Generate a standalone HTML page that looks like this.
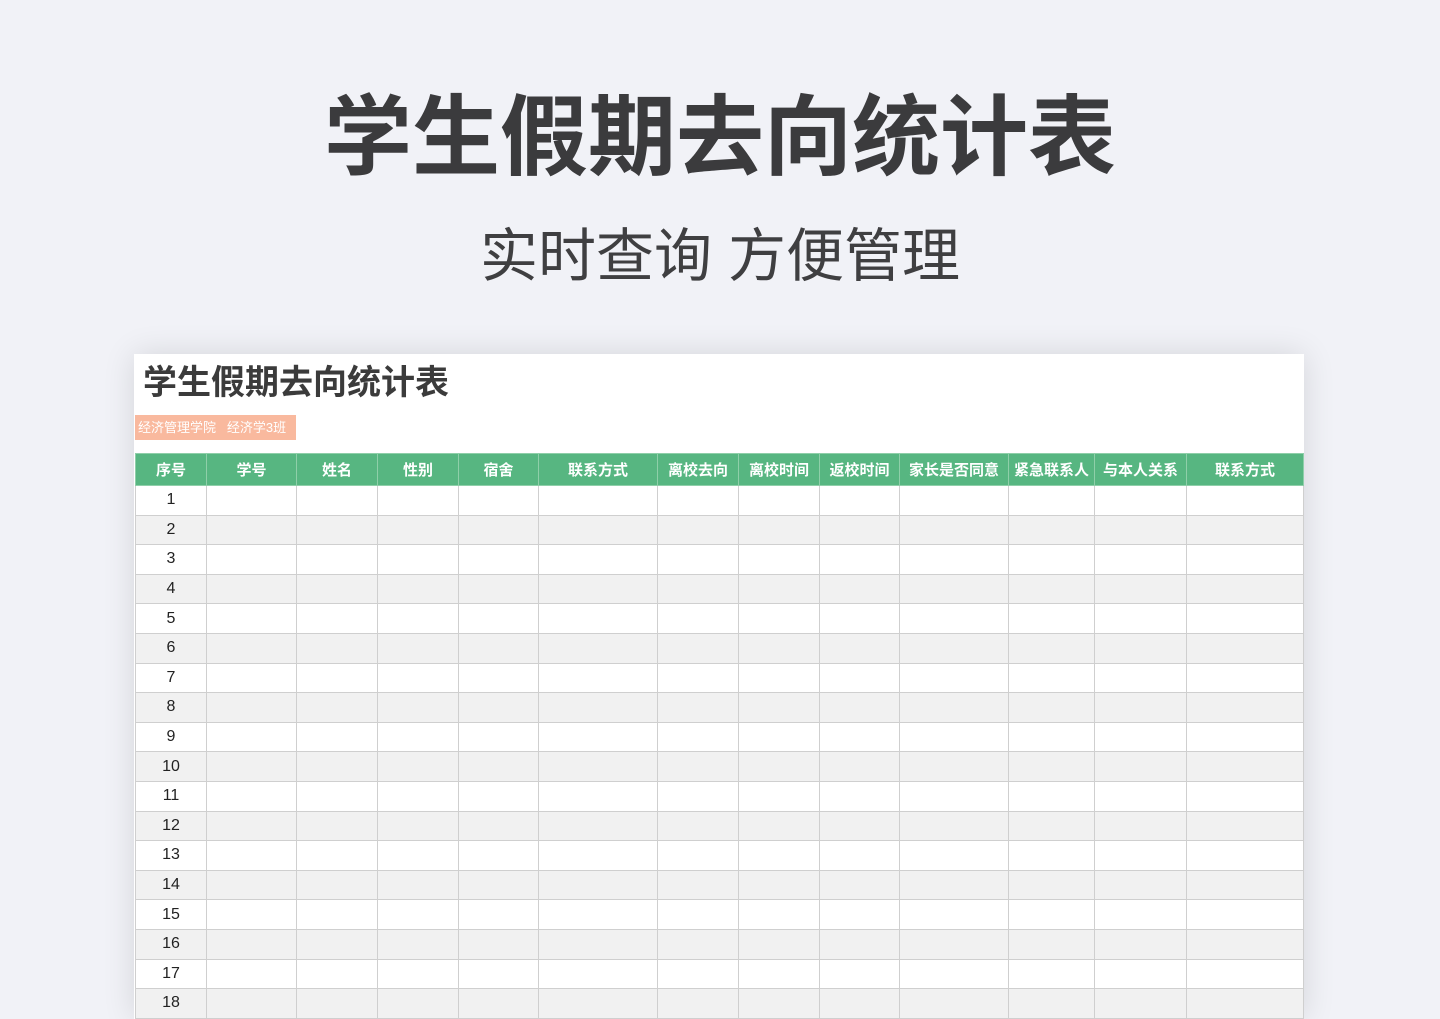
<!DOCTYPE html>
<html><head><meta charset="utf-8">
<style>
html,body{margin:0;padding:0;overflow:hidden;height:1019px;}
body{width:1440px;height:1019px;background:#f1f2f7;position:relative;overflow:hidden;font-family:"Liberation Sans","Noto Sans CJK SC",sans-serif;}
.h1{position:absolute;left:0;width:1440px;top:78px;text-align:center;font-size:88px;font-weight:bold;color:#3b3b3d;line-height:120px;}
.h2{position:absolute;left:0;width:1440px;top:219px;text-align:center;font-size:58px;color:#3f3f41;line-height:76px;}
.card{position:absolute;left:134px;top:354px;width:1170px;height:665px;background:#fff;box-shadow:0 0 30px rgba(0,0,0,0.12);}
.ct{position:absolute;left:143px;top:360px;font-size:34px;font-weight:bold;color:#3b3b3b;line-height:46px;}
.badge{position:absolute;left:135px;top:415px;width:161px;height:25px;background:#f9b99e;color:#fff;font-size:13px;line-height:25px;padding-left:3px;box-sizing:border-box;white-space:pre;}
table{position:absolute;left:135px;top:453px;border-collapse:collapse;table-layout:fixed;width:1168px;}
td{border:1px solid #cfcfcf;padding:0;text-align:center;font-size:16px;color:#222;height:28.6px;}
tr.h td{background:#57b681;color:#fff;font-weight:bold;font-size:15px;height:31px;border-color:#8fcfa9;white-space:nowrap;overflow:hidden;}
tr.g td{background:#f1f1f1;}
</style></head><body>
<div class="h1">学生假期去向统计表</div>
<div class="h2">实时查询 方便管理</div>
<div class="card"></div>
<div class="ct">学生假期去向统计表</div>
<div class="badge">经济管理学院   经济学3班</div>
<table>
<colgroup><col style="width:71px"><col style="width:90px"><col style="width:81px"><col style="width:81px"><col style="width:80px"><col style="width:119px"><col style="width:81px"><col style="width:81px"><col style="width:80px"><col style="width:109px"><col style="width:86px"><col style="width:92px"><col style="width:117px"></colgroup>
<tr class="h"><td>序号</td><td>学号</td><td>姓名</td><td>性别</td><td>宿舍</td><td>联系方式</td><td>离校去向</td><td>离校时间</td><td>返校时间</td><td>家长是否同意</td><td>紧急联系人</td><td>与本人关系</td><td>联系方式</td></tr>
<tr><td>1</td><td></td><td></td><td></td><td></td><td></td><td></td><td></td><td></td><td></td><td></td><td></td><td></td></tr>
<tr class="g"><td>2</td><td></td><td></td><td></td><td></td><td></td><td></td><td></td><td></td><td></td><td></td><td></td><td></td></tr>
<tr><td>3</td><td></td><td></td><td></td><td></td><td></td><td></td><td></td><td></td><td></td><td></td><td></td><td></td></tr>
<tr class="g"><td>4</td><td></td><td></td><td></td><td></td><td></td><td></td><td></td><td></td><td></td><td></td><td></td><td></td></tr>
<tr><td>5</td><td></td><td></td><td></td><td></td><td></td><td></td><td></td><td></td><td></td><td></td><td></td><td></td></tr>
<tr class="g"><td>6</td><td></td><td></td><td></td><td></td><td></td><td></td><td></td><td></td><td></td><td></td><td></td><td></td></tr>
<tr><td>7</td><td></td><td></td><td></td><td></td><td></td><td></td><td></td><td></td><td></td><td></td><td></td><td></td></tr>
<tr class="g"><td>8</td><td></td><td></td><td></td><td></td><td></td><td></td><td></td><td></td><td></td><td></td><td></td><td></td></tr>
<tr><td>9</td><td></td><td></td><td></td><td></td><td></td><td></td><td></td><td></td><td></td><td></td><td></td><td></td></tr>
<tr class="g"><td>10</td><td></td><td></td><td></td><td></td><td></td><td></td><td></td><td></td><td></td><td></td><td></td><td></td></tr>
<tr><td>11</td><td></td><td></td><td></td><td></td><td></td><td></td><td></td><td></td><td></td><td></td><td></td><td></td></tr>
<tr class="g"><td>12</td><td></td><td></td><td></td><td></td><td></td><td></td><td></td><td></td><td></td><td></td><td></td><td></td></tr>
<tr><td>13</td><td></td><td></td><td></td><td></td><td></td><td></td><td></td><td></td><td></td><td></td><td></td><td></td></tr>
<tr class="g"><td>14</td><td></td><td></td><td></td><td></td><td></td><td></td><td></td><td></td><td></td><td></td><td></td><td></td></tr>
<tr><td>15</td><td></td><td></td><td></td><td></td><td></td><td></td><td></td><td></td><td></td><td></td><td></td><td></td></tr>
<tr class="g"><td>16</td><td></td><td></td><td></td><td></td><td></td><td></td><td></td><td></td><td></td><td></td><td></td><td></td></tr>
<tr><td>17</td><td></td><td></td><td></td><td></td><td></td><td></td><td></td><td></td><td></td><td></td><td></td><td></td></tr>
<tr class="g"><td>18</td><td></td><td></td><td></td><td></td><td></td><td></td><td></td><td></td><td></td><td></td><td></td><td></td></tr>
</table>
</body></html>
